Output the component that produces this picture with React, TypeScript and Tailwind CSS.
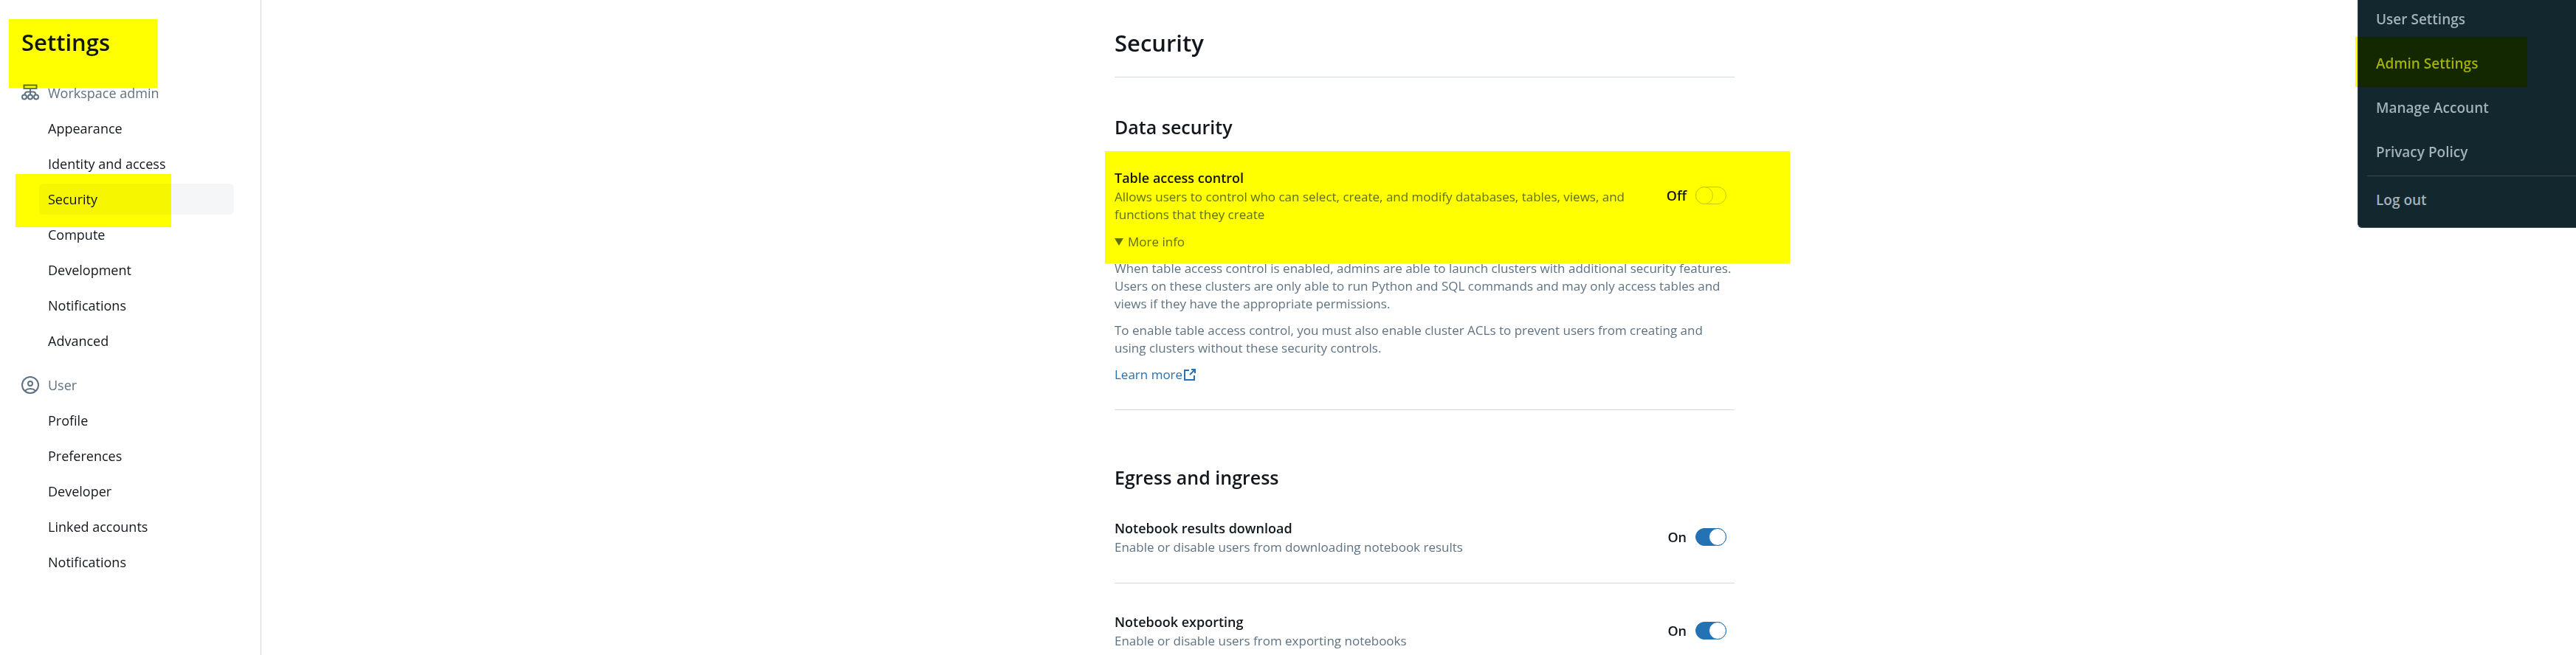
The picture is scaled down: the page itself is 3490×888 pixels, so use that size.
import { useState, type ReactNode } from 'react';

const workspaceItems = [
  'Appearance',
  'Identity and access',
  'Security',
  'Compute',
  'Development',
  'Notifications',
  'Advanced',
];

const userItems = ['Profile', 'Preferences', 'Developer', 'Linked accounts', 'Notifications'];

const menuItems = ['User Settings', 'Admin Settings', 'Manage Account', 'Privacy Policy'];

// Marker-pen box, laid over whatever its relative parent holds
function Highlight({ className }: { className: string }) {
  return (
    <span
      aria-hidden="true"
      className={`pointer-events-none absolute bg-[#ffff00] mix-blend-multiply ${className}`}
    />
  );
}

function WorkspaceIcon() {
  return (
    <svg viewBox="0 0 24 24" className="h-6 w-6 shrink-0" fill="none" stroke="currentColor" strokeWidth="2">
      <path d="M3.5 1.5h17v4.500h-17z" />
      <path d="M12 6v8M4.500 14c.3-2.300 1.600-3.500 4-3.500h7c2.400 0 3.700 1.200 4 3.500" />
      <circle cx="4" cy="17.500" r="3" />
      <circle cx="12" cy="17.500" r="3" />
      <circle cx="20" cy="17.500" r="3" />
    </svg>
  );
}

function UserIcon() {
  return (
    <svg viewBox="0 0 24 24" className="h-6 w-6 shrink-0" fill="none" stroke="currentColor" strokeWidth="2">
      <circle cx="12" cy="12" r="11" />
      <circle cx="12" cy="10" r="3" />
      <path d="M4.800 19.700c2-1.800 4.500-2.700 7.200-2.700s5.200.9 7.200 2.700" />
    </svg>
  );
}

function ExternalLinkIcon() {
  return (
    <svg viewBox="0 0 16 16" className="h-4 w-4" fill="none" stroke="currentColor" strokeWidth="2">
      <path d="M7 2H1v13h13V9" />
      <path d="M8 8l6-6M10 1h5v5" />
    </svg>
  );
}

type NavGroupProps = {
  title: string;
  icon: ReactNode;
  items: string[];
  active?: string;
};

function NavGroup({ title, icon, items, active }: NavGroupProps) {
  return (
    <section>
      <h2 className="flex h-[42px] items-center gap-3 text-[#5f7281]">
        {icon}
        {title}
      </h2>
      <ul className="mt-1.5 flex flex-col gap-1.5 pl-6">
        {items.map((item) => (
          <li key={item} className="relative">
            <a
              href="#"
              aria-current={item === active ? 'page' : undefined}
              className={`flex h-[42px] items-center rounded-md px-3 ${item === active ? 'bg-[#f5f6f8]' : ''}`}
            >
              {item}
            </a>
            {item === active && <Highlight className="-left-8 -top-[13px] h-[72px] w-[211px]" />}
          </li>
        ))}
      </ul>
    </section>
  );
}

type SettingRowProps = {
  id: string;
  title: string;
  description: string;
  defaultOn?: boolean;
};

function SettingRow({ id, title, description, defaultOn = false }: SettingRowProps) {
  const [on, setOn] = useState(defaultOn);

  return (
    <div className="flex items-center gap-8 pr-[11px]">
      <div className="flex-1">
        <h3 className="text-lg leading-7 font-semibold">{title}</h3>
        <p className="text-[17px] leading-6 text-[#5f7281]">{description}</p>
      </div>
      <label htmlFor={id} className="flex items-center gap-3 text-lg leading-7 font-semibold">
        {on ? 'On' : 'Off'}
        <input
          id={id}
          type="checkbox"
          role="switch"
          aria-label={title}
          checked={on}
          onChange={(e) => setOn(e.target.checked)}
          className="h-6 w-[42px] appearance-none rounded-full border border-[#c0cdd8] bg-white before:-mt-px before:-ml-px before:block before:size-6 before:rounded-full before:border before:border-[#c0cdd8] before:bg-white checked:border-[#2272b4] checked:bg-[#2272b4] checked:before:ml-[17px] checked:before:border-[#2272b4]"
        />
      </label>
    </div>
  );
}

export default function App() {
  return (
    <div className="relative flex min-h-screen bg-white font-['Open_Sans','Noto_Sans',sans-serif] text-lg leading-7 text-[#11171c]">
      <aside className="w-[354px] shrink-0 border-r border-[#d1d5da] pt-9 pr-9 pl-[29px]">
        <div className="relative mb-[27px]">
          <h1 className="text-[31px] leading-[42px] font-semibold">Settings</h1>
          <Highlight className="-top-2.5 -left-[17px] h-[93px] w-[201px]" />
        </div>
        <nav className="flex flex-col gap-[18px]">
          <NavGroup title="Workspace admin" icon={<WorkspaceIcon />} items={workspaceItems} active="Security" />
          <NavGroup title="User" icon={<UserIcon />} items={userItems} />
        </nav>
      </aside>

      <main className="flex h-screen flex-1 justify-center overflow-hidden pl-4">
        <div className="w-full max-w-[840px]">
          <h1 className="border-b border-[#d1d9e1] pt-[37px] pb-[25px] text-[31px] leading-[42px] font-semibold">
            Security
          </h1>

          <section className="border-b border-[#d1d9e1] pt-[51px] pb-[35px]">
            <h2 className="text-[25px] leading-8 font-semibold">Data security</h2>
            <div className="relative mt-[39px] text-[17px] leading-6 text-[#5f7281]">
              <div className="text-[#11171c]">
                <SettingRow
                  id="table-access"
                  title="Table access control"
                  description="Allows users to control who can select, create, and modify databases, tables, views, and functions that they create"
                />
              </div>
              <details open className="mt-[13px]">
                <summary className="flex cursor-pointer list-none items-center gap-1.5">
                  <svg viewBox="0 0 12 10" className="h-2.5 w-3" fill="currentColor">
                    <path d="M0 0h12L6 10z" />
                  </svg>
                  More info
                </summary>
                <p className="mt-3">
                  When table access control is enabled, admins are able to launch clusters with additional security
                  features. Users on these clusters are only able to run Python and SQL commands and may only access
                  tables and views if they have the appropriate permissions.
                </p>
                <p className="mt-3">
                  To enable table access control, you must also enable cluster ACLs to prevent users from creating and
                  using clusters without these security controls.
                </p>
                <a href="#" className="mt-3 flex items-center gap-0.5 text-[#2272b4]">
                  Learn more
                  <ExternalLinkIcon />
                </a>
              </details>
              <Highlight className="-top-[22px] -right-[75px] -left-[13px] h-[152px]" />
            </div>
          </section>

          <section className="pt-[75px]">
            <h2 className="text-[25px] leading-8 font-semibold">Egress and ingress</h2>
            <div className="mt-[39px] border-b border-[#d1d9e1] pb-9">
              <SettingRow
                id="results-download"
                title="Notebook results download"
                description="Enable or disable users from downloading notebook results"
                defaultOn
              />
            </div>
            <div className="pt-[38px]">
              <SettingRow
                id="notebook-exporting"
                title="Notebook exporting"
                description="Enable or disable users from exporting notebooks"
                defaultOn
              />
            </div>
          </section>
        </div>
      </main>

      {/* Account menu, scrolled up under the top edge */}
      <nav
        aria-label="Account"
        className="absolute top-0 right-0 w-[296px] rounded-bl-md border-b border-l border-[#37474f] bg-[#13272e] pb-[5px] text-[19px] font-semibold text-[#a3b1b9]"
      >
        <ul className="-mt-1 pb-0.5">
          {menuItems.map((item) => (
            <li key={item} className="relative flex h-[60px] items-center pl-6">
              <a href="#">{item}</a>
              {item === 'Admin Settings' && <Highlight className="-top-1.5 -left-1 h-[68px] w-[233px]" />}
            </li>
          ))}
        </ul>
        <div className="ml-3 border-t border-[#37474f]" />
        <button type="button" className="flex h-16 w-full items-center pl-6">
          Log out
        </button>
      </nav>
    </div>
  );
}
